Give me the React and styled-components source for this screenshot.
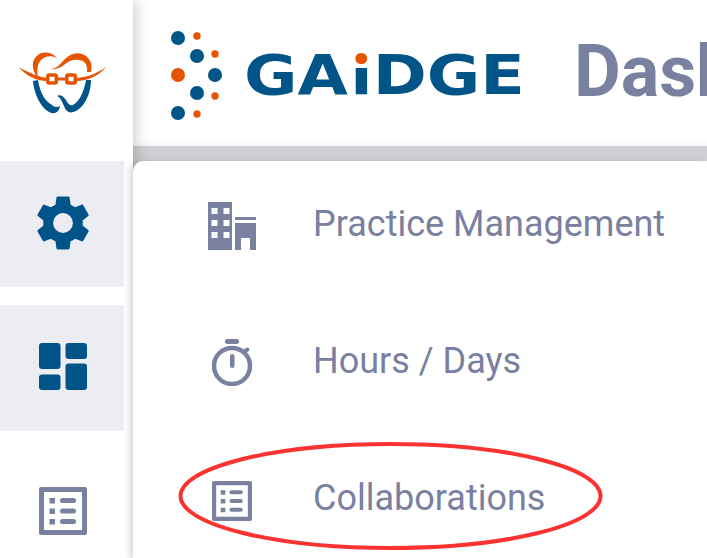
import React from 'react';
import styled, { createGlobalStyle } from 'styled-components';

const navy = '#005487';
const slate = '#7a80a0';
const orange = '#e55500';

const Global = createGlobalStyle`
  html, body { margin: 0; padding: 0; background: #fff; overflow: hidden; }
  body { font-family: Roboto, "Liberation Sans", sans-serif; }
`;

const Page = styled.div`
  position: relative;
  display: flex;
  width: 707px;
  height: 558px;
  overflow: hidden;
`;

const Rail = styled.aside`
  flex: 0 0 133px;
  display: flex;
  flex-direction: column;
  background: #fff;
  box-shadow: 2px 0 14px rgba(0, 0, 0, 0.22);
  position: relative;
  z-index: 2;
`;

const RailLogo = styled.div`
  height: 161px;
  flex: none;
  display: flex;
  padding: 45px 0 0 15px;
  box-sizing: border-box;
`;

const RailButton = styled.div`
  width: 124px;
  height: 126px;
  flex: none;
  display: flex;
  align-items: center;
  justify-content: center;
  padding: 0 0 3px 2px;
  box-sizing: border-box;
  background: ${(p) => (p.$active ? '#ecedf3' : 'transparent')};
  margin-bottom: 18px;
  svg { display: block; }
`;

const Main = styled.main`
  flex: 1;
  display: flex;
  flex-direction: column;
  min-width: 0;
  background: #cfd0d4;
`;

const Header = styled.header`
  height: 146px;
  flex: none;
  display: flex;
  align-items: flex-start;
  background: #fff;
  padding: 29px 0 0 37px;
  box-sizing: border-box;
  overflow: hidden;
  box-shadow: inset 0 -7px 6px -5px rgba(0, 0, 0, 0.05);
`;

const Brand = styled.div`
  display: flex;
  align-items: center;
  gap: 20px;
  flex: none;
`;

const Wordmark = styled.div`
  width: 273px;
  height: 44px;
  color: ${navy};
  font: 700 55px/44px "DejaVu Sans", sans-serif;
  white-space: nowrap;
  transform: scaleX(1.185);
  transform-origin: left center;
`;

const DottedLetter = styled.span`
  position: relative;
  display: inline-block;
  margin-left: 2px;
`;

/* white patch over the letter's square dot, with the round orange one on it */
const LetterDot = styled.span`
  position: absolute;
  left: 50%;
  top: -2px;
  width: 14px;
  height: 17px;
  margin-left: -7px;
  background: #fff;

  &::before {
    content: '';
    position: absolute;
    left: 2.300px;
    top: 2px;
    width: 9.400px;
    height: 11px;
    border-radius: 50%;
    background: ${orange};
  }
`;

const Heading = styled.h1`
  margin: 1px 0 0 57px;
  font-size: 72px;
  line-height: 84px;
  font-weight: 700;
  color: ${slate};
  white-space: nowrap;
`;

const Band = styled.div`
  height: 15px;
  flex: none;
`;

const Menu = styled.nav`
  flex: 1;
  position: relative;
  z-index: 3;
  background: #fff;
  border-top-left-radius: 10px;
  display: flex;
  flex-direction: column;
  gap: 11px;
  box-shadow: -4px 0 7px -1px rgba(0, 0, 0, 0.16);
`;

const MenuRow = styled.div`
  height: 126px;
  flex: none;
  display: flex;
  align-items: center;
  padding-left: 72px;
  font-size: 36px;
  color: ${slate};
  white-space: nowrap;
`;

const MenuIcon = styled.span`
  flex: none;
  width: 54px;
  margin-right: 54px;
  padding-top: ${(p) => p.$drop}px;
  display: flex;
  align-items: center;
  justify-content: center;
  svg { display: block; }
`;

const Ellipse = styled.svg`
  position: absolute;
  left: 178px;
  top: 441px;
  z-index: 4;
  pointer-events: none;
`;

function ToothLogo() {
  return (
    <svg width="95" height="72" viewBox="15 45 95 72">
      <path d="M33 81C34 94 41 108 49 112C55 115 59 112 60 106C57 108 54 107 52 105C45 101 40 93 38 80Z" fill={navy} />
      <path d="M91 80C91 94 84 107 76 111C70 114 66 112 64 106C62 101 60 97 57 96C60 94 63 96 66 100C68 104 70 106 73 105C79 102 84 92 86 80Z" fill={navy} />
      <path d="M38 78C31 70 31 60 38 55C43 51 52 52 57 58C51 55 45 56 41 60C37 64 37 71 38 78Z" fill={orange} />
      <path d="M50 69C57 69 60 64 65 59C70 54 76 52 82 54C90 57 93 64 91 72L87 72C88 64 84 60 78 60C72 59 68 62 64 65C60 68 55 70 50 69Z" fill={orange} />
      <path d="M19 67C28 73 40 77 47 78L47 81C36 81 25 75 19 67Z" fill={orange} />
      <path d="M106 67C98 73 88 77 76 78L76 81C88 81 100 75 106 67Z" fill={orange} />
      <rect x="47.800" y="75" width="8.500" height="8" rx="1.500" fill="#fff" stroke={orange} strokeWidth="3.500" />
      <rect x="66.800" y="75" width="8.500" height="8" rx="1.500" fill="#fff" stroke={orange} strokeWidth="3.500" />
      <rect x="58" y="77.500" width="7" height="3" fill={orange} />
    </svg>
  );
}

function DotMark() {
  const dots = [
    [8, 9, 7, navy], [27, 7, 3.7, orange],
    [27, 27, 7, navy], [45, 25, 3.7, orange],
    [8, 46, 7, orange], [45, 46, 7, navy],
    [27, 64, 7, navy], [45, 67, 3.7, orange],
    [8, 84, 7, navy], [27, 85, 3.7, orange],
  ];
  return (
    <svg width="54" height="92" viewBox="0 0 54 92">
      {dots.map(([cx, cy, r, c]) => <circle key={`${cx}-${cy}`} cx={cx} cy={cy} r={r} fill={c} />)}
    </svg>
  );
}

function Gear() {
  return (
    <svg width="66" height="66" viewBox="0 0 24 24" fill={navy}>
      <path d="M19.14 12.94a7.100 7.100 0 0 0 0-1.880l2.030-1.580a.5.5 0 0 0 .12-.61l-1.920-3.320a.5.5 0 0 0-.59-.22l-2.390.96a7 7 0 0 0-1.620-.94l-.36-2.540a.48.48 0 0 0-.48-.41h-3.840a.48.48 0 0 0-.47.41l-.36 2.540c-.59.24-1.130.57-1.620.94l-2.390-.96a.49.49 0 0 0-.59.22L2.740 8.870a.48.48 0 0 0 .12.61l2.030 1.580a7.300 7.300 0 0 0 0 1.880l-2.030 1.580a.5.5 0 0 0-.12.61l1.920 3.320c.12.22.37.29.59.22l2.390-.96c.5.38 1.030.7 1.620.94l.36 2.540c.05.24.24.41.48.41h3.840c.24 0 .44-.17.47-.41l.36-2.540a7 7 0 0 0 1.620-.94l2.390.96c.22.08.47 0 .59-.22l1.920-3.320a.48.48 0 0 0-.12-.61zM12 15.600A3.600 3.600 0 1 1 12 8.400a3.600 3.600 0 0 1 0 7.200z" />
    </svg>
  );
}

function Dashboard() {
  return (
    <svg width="48" height="47" viewBox="0 0 48 47" fill={navy}>
      <rect x="0" y="0" width="21.500" height="26" rx="3" />
      <rect x="26.500" y="0" width="21.500" height="16" rx="3" />
      <rect x="0" y="31.500" width="21.500" height="15.500" rx="3" />
      <rect x="26.500" y="20.500" width="21.500" height="26.500" rx="3" />
    </svg>
  );
}

function ListBox({ size }) {
  return (
    <svg width={size} height={size} viewBox="0 0 48 48" fill={slate}>
      <path fillRule="evenodd" d="M2 0h44a2 2 0 0 1 2 2v44a2 2 0 0 1-2 2H2a2 2 0 0 1-2-2V2a2 2 0 0 1 2-2zm3 5v38h38V5z" />
      <rect x="10.500" y="11" width="5.500" height="5.500" />
      <rect x="10.500" y="21.500" width="5.500" height="5.500" />
      <rect x="10.500" y="32" width="5.500" height="5.500" />
      <rect x="21" y="11" width="16" height="5" rx="2.500" />
      <rect x="21" y="21.500" width="16" height="5" rx="2.500" />
      <rect x="21" y="32" width="16" height="5" rx="2.500" />
    </svg>
  );
}

function Building() {
  return (
    <svg width="48" height="48" viewBox="0 0 48 48" fill={slate}>
      <path fillRule="evenodd" d="M0 0h24v48H0zM3.500 6v6h6V6zm12 0v6h6V6zM3.500 18v6h6v-6zm12 0v6h6v-6zM3.500 30v6h6v-6zm12 0v6h6v-6z" />
      <rect x="27" y="15" width="21" height="3" />
      <path d="M27 21h21v27h-6V36H33v12h-6z" />
    </svg>
  );
}

function Stopwatch() {
  return (
    <svg width="40" height="47" viewBox="0 0 40 47">
      <rect x="13" y="0" width="14" height="5" rx="2.500" fill={slate} />
      <circle cx="20" cy="27" r="18" fill="none" stroke={slate} strokeWidth="4.500" />
      <rect x="18" y="15" width="4.500" height="14" rx="2.200" fill={slate} />
      <path d="M32 13l3.500-2.500" stroke={slate} strokeWidth="4" strokeLinecap="round" />
    </svg>
  );
}

export default function App() {
  return (
    <Page>
      <Global />
      <Rail>
        <RailLogo><ToothLogo /></RailLogo>
        <RailButton $active><Gear /></RailButton>
        <RailButton $active><Dashboard /></RailButton>
        <RailButton><ListBox size={48} /></RailButton>
      </Rail>
      <Main>
        <Header>
          <Brand>
            <DotMark />
            <Wordmark>GA<DottedLetter>i<LetterDot /></DottedLetter>DGE</Wordmark>
          </Brand>
          <Heading>Dashboard</Heading>
        </Header>
        <Band />
        <Menu>
          <MenuRow><MenuIcon $drop={3}><Building /></MenuIcon>Practice Management</MenuRow>
          <MenuRow><MenuIcon $drop={3}><Stopwatch /></MenuIcon>Hours / Days</MenuRow>
          <MenuRow><MenuIcon $drop={6}><ListBox size={40} /></MenuIcon>Collaborations</MenuRow>
        </Menu>
      </Main>
      <Ellipse width="426" height="112" viewBox="0 0 426 112">
        <ellipse cx="212.500" cy="55" rx="210" ry="52" fill="none" stroke="#fb3232" strokeWidth="4" />
      </Ellipse>
    </Page>
  );
}
